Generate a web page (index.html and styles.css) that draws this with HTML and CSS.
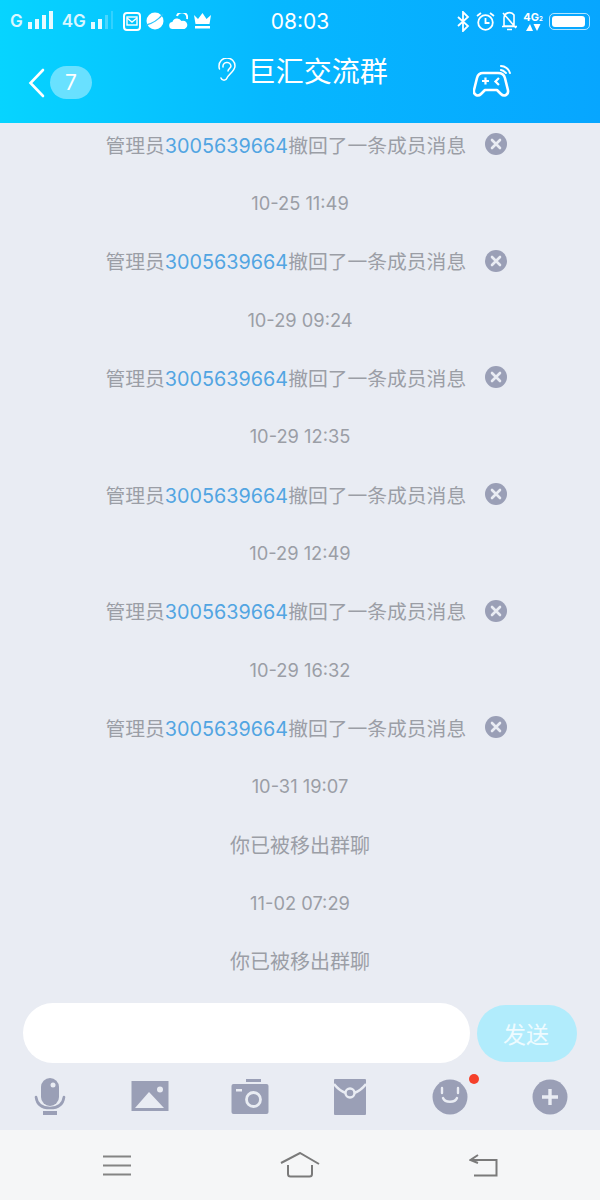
FILE: index.html
```html
<!DOCTYPE html>
<html lang="zh-CN">
<head>
    <meta charset="UTF-8">
    <meta name="viewport" content="width=device-width, initial-scale=1.0">
    <title>巨汇交流群</title>
    <link rel="stylesheet" href="styles.css">
</head>
<body>
    <div class="app">
        <header class="top">
            <!-- Status bar -->
            <div class="status">
                <div class="status-left">
                    <span class="net net-g">G</span>
                    <svg class="bars" width="25" height="20" viewBox="0 0 25 20"><rect x="0" y="11" width="4" height="7" /><rect x="7" y="8" width="4" height="10" /><rect x="14" y="4" width="4" height="14" /><rect x="21" y="0" width="4" height="18" /></svg>
                    <span class="net net-4g">4G</span>
                    <svg class="bars bars-weak" width="23" height="20" viewBox="0 0 23 20"><rect x="0" y="11" width="4" height="7" /><rect x="7" y="8" width="4" height="10" /><rect x="14" y="4" width="3" height="14" opacity=".3" /><rect x="20" y="0" width="2" height="18" opacity=".2" /></svg>
                    <svg class="ic-mail" width="18" height="19" viewBox="0 0 18 19"><rect x="1" y="1" width="16" height="17" rx="3" fill="none" stroke="#fff" stroke-width="2" /><rect x="4" y="5" width="10" height="8" fill="none" stroke="#fff" stroke-width="1.4" /><path d="M4 6l5 4 5-4" fill="none" stroke="#fff" stroke-width="1.4" /></svg>
                    <svg class="ic-planet" width="18" height="18" viewBox="0 0 18 18"><circle cx="9" cy="9" r="8.5" fill="#fff" /><path d="M0 13C6 12 13 7 17 2" fill="none" stroke="#2cc4fb" stroke-width="1.3" /></svg>
                    <svg class="ic-cloud" width="19" height="17" viewBox="0 0 19 17"><path d="M4 16a3.5 3.5 0 0 1-.6-7A5 5 0 0 1 12.500 8a3.500 3.500 0 0 1 3 8z" fill="#fff" /><path d="M8 3a5 5 0 0 1 10 3" fill="none" stroke="#fff" stroke-width="2" /></svg>
                    <svg class="ic-crown" width="17" height="16" viewBox="0 0 17 16"><path d="M0 2l4 4 4.500-6 4 6 4.500-4-1.500 9H1.500z" fill="#fff" /><rect x="1" y="13" width="15" height="2.500" fill="#fff" /></svg>
                </div>
                <div class="clock">08:03</div>
                <div class="status-right">
                    <svg width="13" height="21" viewBox="0 0 13 21"><path d="M1 6l10 9-5 5V1l5 5-10 9" fill="none" stroke="#fff" stroke-width="1.800" /></svg>
                    <svg width="19" height="19" viewBox="0 0 19 19"><circle cx="9.500" cy="10.500" r="7.300" fill="none" stroke="#fff" stroke-width="1.800" /><path d="M9.500 6v5h4M1 4l4-3M18 4l-4-3" fill="none" stroke="#fff" stroke-width="1.800" /></svg>
                    <svg width="17" height="20" viewBox="0 0 17 20"><path d="M3 15V7a5.500 5.500 0 0 1 10-3v11zM1 15.500h15M6 18.500h5M2 2l13 15" fill="none" stroke="#fff" stroke-width="1.600" /></svg>
                    <div class="sim">
                        <span class="sim-label">4G<i>2</i></span>
                        <svg width="17" height="7" viewBox="0 0 17 7"><path d="M5 0l3 7H1zM8.500 0h7l-3.500 7z" fill="#fff" /></svg>
                    </div>
                    <div class="battery"><div class="battery-level"></div></div>
                </div>
            </div>
            <!-- Title bar -->
            <div class="titlebar">
                <div class="back">
                    <svg width="17" height="30" viewBox="0 0 17 30"><path d="M15 2L2.500 15 15 28" fill="none" stroke="#fff" stroke-width="2.600" stroke-linecap="round" /></svg>
                    <span class="badge">7</span>
                </div>
                <div class="title">
                    <svg width="20" height="24" viewBox="0 0 20 24"><path d="M4 20c1 3 5 3 6 0 1-3 8-7 8-12A8 8 0 0 0 2 8c0 1 0 2 .5 3M6 9a4 4 0 0 1 8-1c0 2-3 3-3 5" fill="none" stroke="#fff" stroke-width="1.500" stroke-linecap="round" /></svg>
                    <span>巨汇交流群</span>
                </div>
                <svg class="game" width="39" height="33" viewBox="0 0 39 33"><path d="M10 8h15c4 0 6 1 7 5l3 12c1 5-4 7-7 4l-4-4H12l-4 4c-3 3-8 1-7-4l3-12c1-4 3-5 6-5z" fill="none" stroke="#fff" stroke-width="2.600" stroke-linejoin="round" /><path d="M9 16h7M12.500 12.500v7" stroke="#fff" stroke-width="2.200" /><path d="M26 13l-3.500 3.500L26 20" fill="none" stroke="#fff" stroke-width="2.200" /><path d="M28 1c4 0 8 3 9 7M28 5c2 0 4 2 5 3" fill="none" stroke="#fff" stroke-width="2" stroke-linecap="round" /></svg>
            </div>
        </header>

        <main class="messages">
            <div class="list">
                <div class="row row-recall"><span class="notice">管理员<span class="uid">3005639664</span>撤回了一条成员消息</span><span class="close"><svg width="22" height="22" viewBox="0 0 22 22"><circle cx="11" cy="11" r="11" fill="#9a9fb6" /><path d="M7 7l8 8M15 7l-8 8" stroke="#e9ecf3" stroke-width="2.600" stroke-linecap="round" /></svg></span></div>
                <div class="row time">10-25 11:49</div>
                <div class="row row-recall"><span class="notice">管理员<span class="uid">3005639664</span>撤回了一条成员消息</span><span class="close"><svg width="22" height="22" viewBox="0 0 22 22"><circle cx="11" cy="11" r="11" fill="#9a9fb6" /><path d="M7 7l8 8M15 7l-8 8" stroke="#e9ecf3" stroke-width="2.600" stroke-linecap="round" /></svg></span></div>
                <div class="row time">10-29 09:24</div>
                <div class="row row-recall"><span class="notice">管理员<span class="uid">3005639664</span>撤回了一条成员消息</span><span class="close"><svg width="22" height="22" viewBox="0 0 22 22"><circle cx="11" cy="11" r="11" fill="#9a9fb6" /><path d="M7 7l8 8M15 7l-8 8" stroke="#e9ecf3" stroke-width="2.600" stroke-linecap="round" /></svg></span></div>
                <div class="row time">10-29 12:35</div>
                <div class="row row-recall"><span class="notice">管理员<span class="uid">3005639664</span>撤回了一条成员消息</span><span class="close"><svg width="22" height="22" viewBox="0 0 22 22"><circle cx="11" cy="11" r="11" fill="#9a9fb6" /><path d="M7 7l8 8M15 7l-8 8" stroke="#e9ecf3" stroke-width="2.600" stroke-linecap="round" /></svg></span></div>
                <div class="row time">10-29 12:49</div>
                <div class="row row-recall"><span class="notice">管理员<span class="uid">3005639664</span>撤回了一条成员消息</span><span class="close"><svg width="22" height="22" viewBox="0 0 22 22"><circle cx="11" cy="11" r="11" fill="#9a9fb6" /><path d="M7 7l8 8M15 7l-8 8" stroke="#e9ecf3" stroke-width="2.600" stroke-linecap="round" /></svg></span></div>
                <div class="row time">10-29 16:32</div>
                <div class="row row-recall"><span class="notice">管理员<span class="uid">3005639664</span>撤回了一条成员消息</span><span class="close"><svg width="22" height="22" viewBox="0 0 22 22"><circle cx="11" cy="11" r="11" fill="#9a9fb6" /><path d="M7 7l8 8M15 7l-8 8" stroke="#e9ecf3" stroke-width="2.600" stroke-linecap="round" /></svg></span></div>
                <div class="row time">10-31 19:07</div>
                <div class="row system">你已被移出群聊</div>
                <div class="row time">11-02 07:29</div>
                <div class="row system">你已被移出群聊</div>
            </div>
        </main>

        <div class="composer">
            <div class="input"></div>
            <div class="send">发送</div>
        </div>

        <div class="toolbar">
            <svg width="32" height="38" viewBox="0 0 32 38"><rect x="7" y="0" width="18" height="28" rx="9" fill="#9a9fb6" /><circle cx="19" cy="7" r="2.500" fill="#e9ecf3" /><path d="M2 19c1 8 7 11 14 11s13-3 14-11" fill="none" stroke="#9a9fb6" stroke-width="2.600" stroke-linecap="round" /><rect x="9" y="33" width="14" height="4" fill="#9a9fb6" /></svg>
            <svg width="38" height="31" viewBox="0 0 38 31"><rect width="37" height="30" x="0.500" fill="#9a9fb6" /><circle cx="29" cy="8.500" r="3" fill="#e9ecf3" /><path d="M4 27L18 11l15 16z" fill="#e9ecf3" /></svg>
            <svg width="38" height="35" viewBox="0 0 38 35"><rect x="15" y="0" width="15" height="3" fill="#9a9fb6" /><rect x="0.500" y="5" width="37" height="30" rx="2" fill="#9a9fb6" /><rect x="5" y="10" width="6" height="2.500" fill="#e9ecf3" /><circle cx="22.500" cy="20.500" r="7" fill="none" stroke="#e9ecf3" stroke-width="2.800" /></svg>
            <svg width="32" height="36" viewBox="0 0 32 36"><path d="M0 1a1 1 0 0 1 1-1h30a1 1 0 0 1 1 1v34a1 1 0 0 1-1 1H1a1 1 0 0 1-1-1z" fill="#9a9fb6" /><path d="M0 5c4 5 9 8 12 9M32 5c-4 5-9 8-12 9" fill="none" stroke="#e9ecf3" stroke-width="2.400" /><circle cx="16" cy="14" r="4.500" fill="none" stroke="#e9ecf3" stroke-width="2.400" /></svg>
            <div class="smile">
                <svg width="36" height="36" viewBox="0 0 36 36"><circle cx="18" cy="18" r="17.500" fill="#9a9fb6" /><path d="M10 9v5M26 9v5" stroke="#e9ecf3" stroke-width="2.400" stroke-linecap="round" /><path d="M11 19c2 5 12 5 14 0" fill="none" stroke="#e9ecf3" stroke-width="2.400" stroke-linecap="round" /></svg>
                <span class="dot"></span>
            </div>
            <svg width="36" height="36" viewBox="0 0 36 36"><circle cx="18" cy="18" r="17.500" fill="#9a9fb6" /><path d="M10 18h16M18 10v16" stroke="#e9ecf3" stroke-width="3.400" /></svg>
        </div>

        <nav class="navbar">
            <svg width="28" height="21" viewBox="0 0 28 21"><path d="M0 1.500h28M0 10.500h28M0 19.500h28" stroke="#848484" stroke-width="2" /></svg>
            <svg width="40" height="26" viewBox="0 0 40 26"><path d="M1 11L20 1l19 11" fill="none" stroke="#7a7a7a" stroke-width="2" /><path d="M8 13v9q0 2.500 2.500 2.500h19q2.500 0 2.500-2.500v-9" fill="none" stroke="#7a7a7a" stroke-width="2" /></svg>
            <svg width="29" height="23" viewBox="0 0 29 23"><path d="M3 6h24.500v15.500H5" fill="none" stroke="#7a7a7a" stroke-width="2" /><path d="M9 1L1.500 6 9 9" fill="none" stroke="#7a7a7a" stroke-width="2" /></svg>
        </nav>
    </div>
</body>
</html>
```

FILE: styles.css
```css
* {
    box-sizing: border-box;
}
body {
    margin: 0;
    font-family: Inter, "Noto Sans CJK SC", sans-serif;
    background-color: #e9ecf3;
}
.app {
    width: 600px;
    height: 1200px;
    display: flex;
    flex-direction: column;
    overflow: hidden;
}
.top {
    height: 123px;
    flex: none;
    color: #fff;
    background: linear-gradient(90deg, #06d4ff 0%, #06b8ff 45%, #07a6ff 100%);
}
.status {
    height: 42px;
    padding: 0 10px;
    display: grid;
    grid-template-columns: 1fr auto 1fr;
    align-items: center;
}
.status-left, .status-right {
    display: flex;
    align-items: center;
}
.status-right {
    justify-content: flex-end;
    gap: 6px;
}
.net {
    font-size: 17px;
    font-weight: 600;
    opacity: .85;
}
.net-g {
    margin-right: 5px;
}
.net-4g {
    margin: 0 5px 0 9px;
}
.bars {
    fill: #fff;
    opacity: .9;
}
.ic-mail {
    margin-left: 9px;
}
.ic-planet {
    margin-left: 5px;
}
.ic-cloud {
    margin-left: 5px;
}
.ic-crown {
    margin-left: 6px;
}
.clock {
    font-size: 21px;
    width: 60px;
    text-align: center;
}
.sim {
    width: 18px;
    display: flex;
    flex-direction: column;
    align-items: center;
    line-height: 10px;
}
.sim-label {
    font-size: 11px;
    font-weight: 700;
}
.sim-label i {
    font-size: 6px;
    font-style: normal;
}
.battery {
    width: 41px;
    height: 17px;
    margin-left: 1px;
    padding: 2px;
    border: 1.5px solid rgba(255,255,255,.7);
    border-radius: 5px;
}
.battery-level {
    width: 33px;
    height: 100%;
    background-color: #fff;
    border-radius: 3px;
}
.titlebar {
    height: 81px;
    padding: 0 88px 0 28px;
    display: flex;
    align-items: flex-start;
}
.back {
    width: 160px;
    padding-top: 24px;
    display: flex;
    align-items: center;
    gap: 5px;
}
.badge {
    width: 42px;
    height: 33px;
    border-radius: 17px;
    background-color: rgba(255,255,255,.4);
    font-size: 21px;
    text-align: center;
    line-height: 33px;
}
.title {
    width: 286px;
    padding: 8px 0 0 29px;
    display: flex;
    align-items: center;
    gap: 11px;
    font-size: 28px;
    white-space: nowrap;
}
.game {
    margin-top: 23px;
}
.messages {
    flex: 1;
    min-height: 0;
    overflow: hidden;
}
/* list is scrolled a little: the first notice sits right under the header */
.list {
    margin-top: -8px;
}
.row {
    height: 58.330px;
    display: flex;
    align-items: center;
    justify-content: center;
    color: #9b9ea6;
}
.row-recall {
    justify-content: flex-start;
    padding-left: 105.500px;
    gap: 19px;
}
.notice {
    font-size: 19.800px;
    white-space: nowrap;
}
.uid {
    color: #52a5e2;
    font-size: 19.800px;
}
.close {
    display: flex;
}
.time {
    font-size: 18.300px;
    padding-top: 1px;
}
.system {
    font-size: 20px;
}
.composer {
    height: 60px;
    flex: none;
    padding: 0 23px;
    display: flex;
    align-items: center;
    gap: 7px;
}
.input {
    flex: 1;
    height: 60px;
    background-color: #fff;
    border-radius: 30px;
}
.send {
    width: 100px;
    height: 57px;
    padding-right: 2px;
    border-radius: 29px;
    background-color: #b1ecfc;
    color: #eefbff;
    font-size: 23px;
    display: flex;
    align-items: center;
    justify-content: center;
}
.toolbar {
    height: 67px;
    flex: none;
    display: grid;
    grid-template-columns: repeat(6, 100px);
    justify-items: center;
    align-items: center;
}
.smile {
    position: relative;
    display: flex;
}
.dot {
    position: absolute;
    top: -5px;
    right: -11px;
    width: 10px;
    height: 10px;
    border-radius: 50%;
    background-color: #f5402a;
}
.navbar {
    height: 70px;
    flex: none;
    padding-left: 25.500px;
    background-color: #f5f6f7;
    display: grid;
    grid-template-columns: repeat(3, 183px);
    align-items: center;
    justify-items: center;
}
```
